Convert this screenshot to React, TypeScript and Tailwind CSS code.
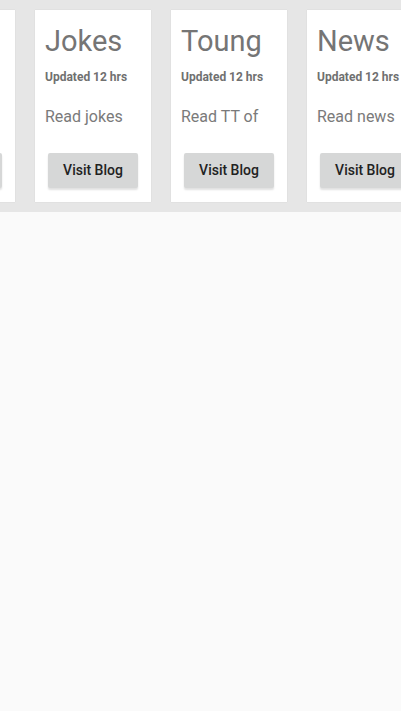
import React from "react";

const cards = [
  { title: "Tech", text: "Read tech" },
  { title: "Jokes", text: "Read jokes" },
  { title: "Toung", text: "Read TT of" },
  { title: "News", text: "Read news" },
];

export default function App() {
  return (
    <div className="min-h-[711px] bg-[#fafafa] overflow-hidden" style={{ fontFamily: "Roboto, 'Liberation Sans', sans-serif" }}>
      <div className="bg-[#e6e6e6] py-[10px] overflow-hidden">
        <div className="flex gap-[20px] ml-[-101px] w-max">
          {cards.map((c) => (
            <div
              key={c.title}
              className="w-[116px] h-[192px] shrink-0 bg-white shadow-[0_0_1px_rgba(0,0,0,0.12)] px-[10px] pt-[13px] overflow-hidden"
            >
              <div className="text-[29px] leading-[36px] text-[#757575] whitespace-nowrap">{c.title}</div>
              <div className="mt-[10px] text-[12px] leading-[16px] font-bold text-[#707070] whitespace-nowrap">Updated 12 hrs</div>
              <div className="mt-[20px] text-[16px] leading-[24px] text-[#7a7a7a] whitespace-nowrap">{c.text}</div>
              <button className="mt-[24px] ml-[3px] w-[90px] h-[35px] rounded-[2px] bg-[#d6d7d7] shadow-[0_2px_2px_rgba(0,0,0,0.12)] text-[14px] font-medium text-[#222] whitespace-nowrap">
                Visit Blog
              </button>
            </div>
          ))}
        </div>
      </div>
    </div>
  );
}
